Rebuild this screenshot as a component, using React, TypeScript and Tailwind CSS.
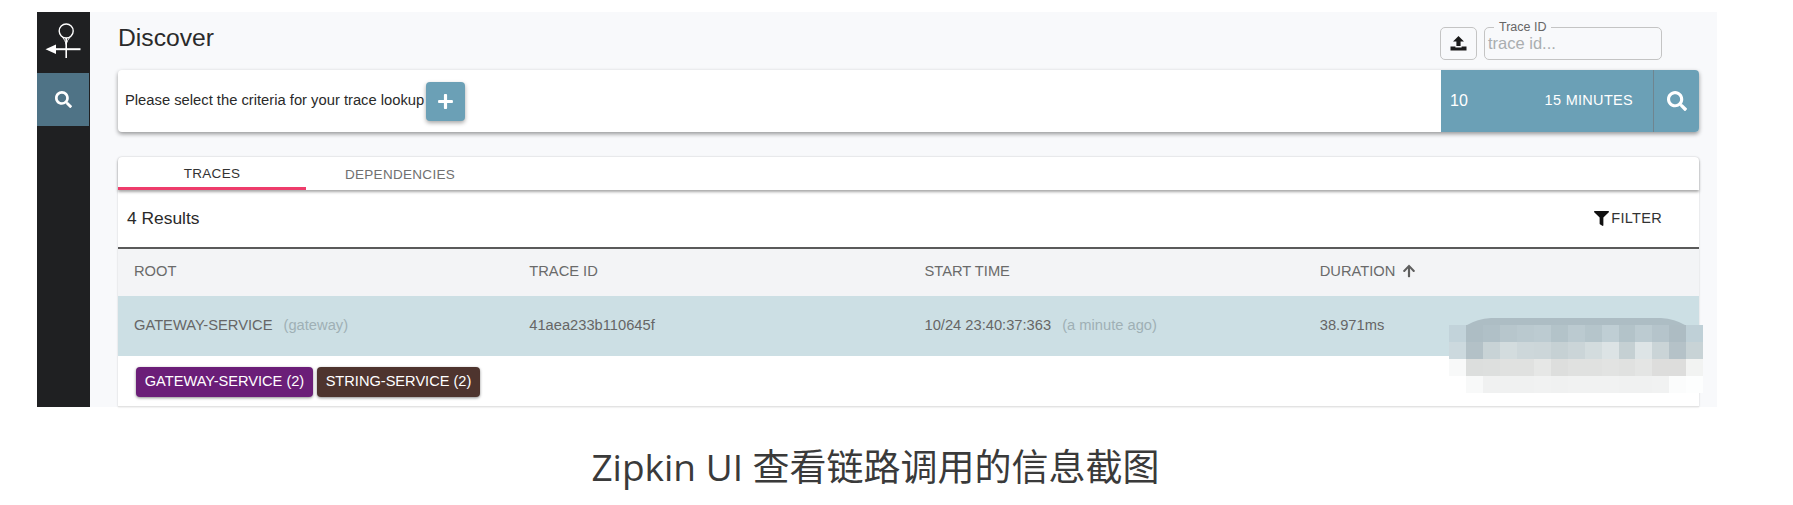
import React from "react";
import { FaSearch, FaPlus, FaFilter, FaArrowUp } from "react-icons/fa";

const font = "font-['Liberation_Sans','Noto_Sans_CJK_SC',sans-serif]";

const blurRows = [
  ["#c2d3da","#adbdc4","#b0c0c7","#b7c6cc","#bac9cf","#bccbd1","#b3c3c9","#bbcad0","#b5c5cb","#bfced4","#b3c3c9","#bccbd1","#b5c4cb","#adbcc3","#bfd0d7"],
  ["#ccd9de","#b3c1c7","#c8d3d6","#d3dcde","#cdd7da","#ccd6d9","#c6d1d4","#cbd5d8","#d3dcde","#dce3e5","#c5d0d3","#dde4e6","#cad4d7","#b5c2c8","#c8d3d6"],
  ["#f8f9f9","#dcdedd","#dddfde","#e0e1e0","#e0e1e0","#e6e7e6","#dddedd","#e0e1e0","#e0e1e0","#e2e3e2","#e0e1e0","#e4e5e4","#dddddc","#dddddc","#f2f3f2"],
  ["#ffffff","#f8f9f9","#f0f1f1","#f0f1f1","#f0f1f1","#f1f2f2","#f0f1f1","#f1f2f2","#f1f2f2","#f1f2f2","#f0f1f1","#f0f1f1","#f1f2f2","#fbfcfc","#fdfefe"],
];

function Logo() {
  return (
    <svg width="38" height="40" viewBox="0 0 38 40" fill="none" stroke="#fff">
      <circle cx="21.2" cy="8" r="7" strokeWidth="1.4" />
      <path d="M17.5 14.5c2 2 2.7 3.5 3.7 7M24.9 14.5c-2 2-2.7 3.5-3.7 7" strokeWidth="1" />
      <path d="M21.2 15V35" strokeWidth="1.6" />
      <path d="M35.5 26.2H9" strokeWidth="2" />
      <path d="M0.5 26.2l10.5-4.7v9.4z" fill="#fff" stroke="none" />
    </svg>
  );
}

function UploadIcon() {
  return (
    <svg width="17" height="15" viewBox="0 0 17 15" fill="#1b1b1b">
      <path d="M8.5 0L14 5.5H10.6V10H6.4V5.5H3z" />
      <path d="M0.5 10.5H5.4V11.5H11.6V10.5H16.5V14.5H0.5z" />
    </svg>
  );
}

export default function App() {
  const cols = "grid grid-cols-4";
  return (
    <div className={`${font} relative w-[1793px] h-[505px] bg-white overflow-hidden`}>
      <div className="pt-3 pl-[37px]">
        <div className="flex w-[1680px] h-[395px]">
          <aside className="w-[53px] shrink-0 bg-[#1f2022] flex flex-col">
            <div className="h-[61px] flex items-center justify-center">
              <Logo />
            </div>
            <div className="h-[53px] w-[52px] bg-[#4f7386] flex items-center justify-center text-white">
              <FaSearch className="w-[17px] h-[17px]" />
            </div>
          </aside>
          <main className="flex-1 bg-[#f8f9fb] pl-7 pr-[18px] flex flex-col">
            <header className="h-[58px] flex justify-between">
              <h1 className="text-[24.7px] leading-none pt-[14px] text-[#2a2a2a]">Discover</h1>
              <div className="flex gap-[7px] pt-[15px] pr-[37px]">
                <button className="w-[37px] h-[33px] rounded-[5px] border border-[#c4c4c4] flex items-center justify-center">
                  <UploadIcon />
                </button>
                <div className="relative w-[178px] h-[33px] rounded-[5px] border border-[#c4c4c4] pl-[3px] flex items-center text-[16.5px] text-[#aaaeb0]">
                  <span className="absolute -top-[8px] left-[9px] bg-[#f8f9fb] px-[5px] text-[12.5px] leading-[14px] text-[#666]">Trace ID</span>
                  trace id...
                </div>
              </div>
            </header>

            <section className="h-[62px] bg-white rounded-[4px] shadow-[0_2px_4px_rgba(0,0,0,0.4)] flex items-stretch overflow-hidden">
              <div className="flex-1 flex items-center pl-[7px] gap-[2px]">
                <span className="text-[14.75px] text-[#2a2a2a] -mt-[2px]">Please select the criteria for your trace lookup</span>
                <button className="w-[39px] h-[39px] rounded-[4px] bg-[#6ba0b6] shadow-[0_2px_4px_rgba(0,0,0,0.35)] flex items-center justify-center text-white">
                  <FaPlus className="w-[17px] h-[17px]" />
                </button>
              </div>
              <div className="w-[212px] bg-[#6ba0b6] flex items-center justify-between pl-[9px] pr-5 text-white">
                <span className="text-[16px]">10</span>
                <span className="text-[14.5px] tracking-[0.3px]">15 MINUTES</span>
              </div>
              <div className="w-[46px] bg-[#6ba0b6] border-l border-[#6f8590] flex items-center justify-center text-white">
                <FaSearch className="w-[20px] h-[20px]" />
              </div>
            </section>

            <section className="mt-[25px] flex-1 flex flex-col bg-white rounded-t-[4px] shadow-[0_0_2px_rgba(0,0,0,0.2)]">
              <nav className="h-[33px] flex rounded-t-[4px] shadow-[0_2px_3px_rgba(0,0,0,0.35)] relative">
                <div className="w-[188px] border-b-[3px] border-[#ee3c6b] flex items-center justify-center pt-[4px] text-[13.5px] tracking-[0.3px] text-[#333]">TRACES</div>
                <div className="w-[188px] flex items-center justify-center pt-[3px] text-[13.5px] tracking-[0.3px] text-[#707070]">DEPENDENCIES</div>
              </nav>
              <div className="h-[57px] flex items-center justify-between pl-[9px] pr-[37px]">
                <span className="text-[17.4px] text-[#2a2a2a]">4 Results</span>
                <span className="flex items-center gap-[2px] text-[14.5px] tracking-[0.3px] text-[#333]">
                  <FaFilter className="w-[15px] h-[15px] text-[#111]" />
                  FILTER
                </span>
              </div>
              <div className={`${cols} h-[49px] items-center border-t-2 border-[#5a5a5a] bg-[#f3f4f6] pb-[3px] text-[14.7px] text-[#6a6a6a]`}>
                <span className="pl-4">ROOT</span>
                <span className="pl-4">TRACE ID</span>
                <span className="pl-4">START TIME</span>
                <span className="pl-4 flex items-center gap-[7px]">DURATION <FaArrowUp className="w-[14px] h-[14px] text-[#5f5f5f]" /></span>
              </div>
              <div className={`${cols} h-[60px] items-center bg-[#ccdfe4] pb-[2px] text-[14.7px] text-[#666]`}>
                <span className="pl-4">GATEWAY-SERVICE <span className="ml-[7px] text-[#9fb0b5]">(gateway)</span></span>
                <span className="pl-4">41aea233b110645f</span>
                <span className="pl-4">10/24 23:40:37:363 <span className="ml-[7px] text-[#9fb0b5]">(a minute ago)</span></span>
                <span className="pl-4">38.971ms</span>
              </div>
              <div className="h-[51px] flex items-center gap-[4px] pl-[18px] pt-[2px] border-b border-[#e3e3e3]">
                <span className="h-[30px] w-[177px] rounded-[4px] bg-[#6b1e78] text-white text-[14.6px] flex items-center justify-center shadow-[0_1px_3px_rgba(0,0,0,0.45)]">GATEWAY-SERVICE (2)</span>
                <span className="h-[30px] w-[163px] rounded-[4px] bg-[#4e342e] text-white text-[14.6px] flex items-center justify-center shadow-[0_1px_3px_rgba(0,0,0,0.45)]">STRING-SERVICE (2)</span>
              </div>
            </section>
          </main>
        </div>
      </div>

      <p className="mt-[36px] text-center text-[37px] leading-[48px] text-[#3a3a3a] font-['Open_Sans','Noto_Sans_CJK_SC',sans-serif] font-normal pr-[42px]">
        Zipkin UI 查看链路调用的信息截图
      </p>

      <svg className="absolute left-[1449px] top-[317px]" width="254" height="76" viewBox="0 0 254 76">
        <path d="M18 8Q28 2 42 1H212Q226 2 236 8z" fill="#adbdc4" />
        <g shapeRendering="crispEdges">
          {blurRows.map((row, r) =>
            row.map((c, i) => <rect key={`${r}-${i}`} x={i * 16.95} y={8 + r * 17} width="17" height="17" fill={c} />)
          )}
        </g>
      </svg>
    </div>
  );
}
